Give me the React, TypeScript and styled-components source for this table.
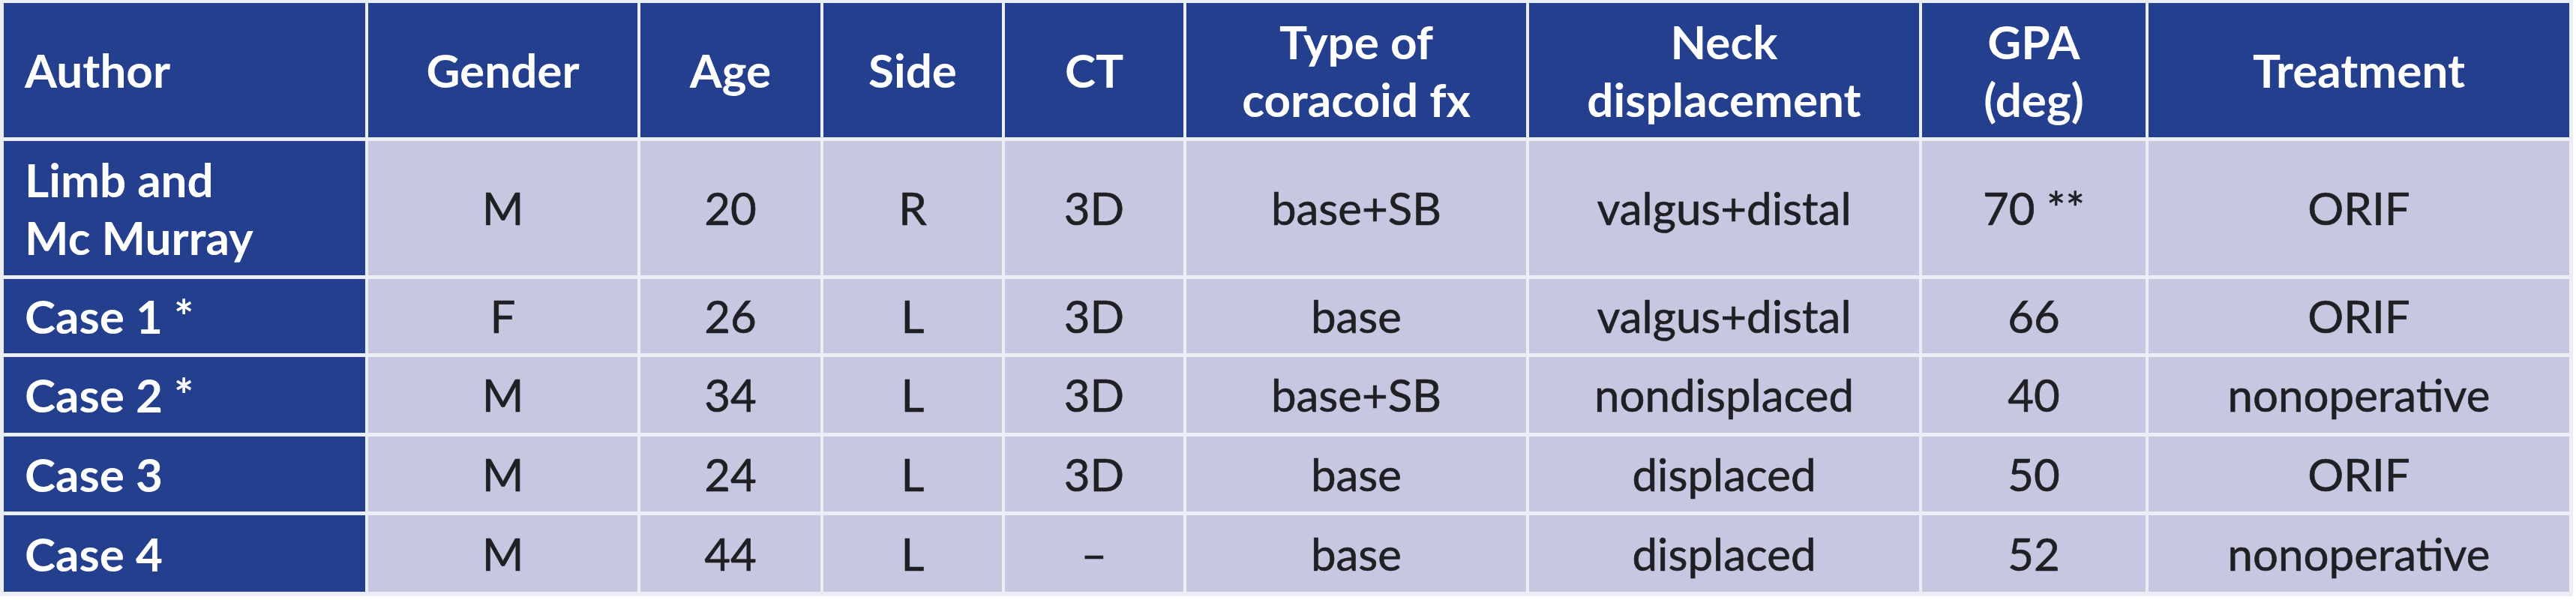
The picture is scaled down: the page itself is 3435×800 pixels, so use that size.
import styled, { createGlobalStyle } from "styled-components";

const GlobalStyle = createGlobalStyle`
  html, body {
    margin: 0;
    padding: 0;
    background: #ffffff;
  }
  body {
    font-family: Lato, "Open Sans", "Liberation Sans", sans-serif;
  }
`;

const columns = [482, 359, 240, 238, 238, 453, 520, 298, 561];

const headers = [
  "Author",
  "Gender",
  "Age",
  "Side",
  "CT",
  "Type of\ncoracoid fx",
  "Neck\ndisplacement",
  "GPA\n(deg)",
  "Treatment",
];

const rows = [
  ["Limb and\nMc Murray", "M", "20", "R", "3D", "base+SB", "valgus+distal", "70 **", "ORIF"],
  ["Case 1 *", "F", "26", "L", "3D", "base", "valgus+distal", "66", "ORIF"],
  ["Case 2 *", "M", "34", "L", "3D", "base+SB", "nondisplaced", "40", "nonoperative"],
  ["Case 3", "M", "24", "L", "3D", "base", "displaced", "50", "ORIF"],
  ["Case 4", "M", "44", "L", "–", "base", "displaced", "52", "nonoperative"],
];

const rowHeights = [179, 179, 99, 101, 100, 102];

const Table = styled.div<{ $cols: number[]; $rows: number[] }>`
  display: grid;
  grid-template-columns: ${(p) => p.$cols.map((c) => `${c}px`).join(" ")};
  grid-template-rows: ${(p) => p.$rows.map((r) => `${r}px`).join(" ")};
  column-gap: 4px;
  row-gap: 5px;
  padding: 4px 5px 6px 5px;
  width: max-content;
  background: #eceef6;
`;

const HeadCell = styled.div<{ $left?: boolean }>`
  display: flex;
  align-items: center;
  justify-content: ${(p) => (p.$left ? "flex-start" : "center")};
  padding: 0 ${(p) => (p.$left ? "28px" : "8px")};
  background: #243f8d;
  color: #ffffff;
  font-weight: 700;
  font-size: 62px;
  line-height: 77px;
  text-align: ${(p) => (p.$left ? "left" : "center")};
  white-space: pre-line;
`;

const Cell = styled.div`
  display: flex;
  align-items: center;
  justify-content: center;
  background: #c6c7e1;
  color: #202024;
  font-weight: 400;
  font-size: 60px;
  line-height: 77px;
  text-align: center;
  white-space: pre-line;
  -webkit-text-stroke: 0.6px #202024;
`;

export default function App() {
  return (
    <>
      <GlobalStyle />
      <Table $cols={columns} $rows={rowHeights}>
        {headers.map((h, i) => (
          <HeadCell key={h} $left={i === 0}>
            {h}
          </HeadCell>
        ))}
        {rows.map((row) =>
          row.map((value, i) =>
            i === 0 ? (
              <HeadCell key={`${row[0]}-${i}`} $left>
                {value}
              </HeadCell>
            ) : (
              <Cell key={`${row[0]}-${i}`}>{value}</Cell>
            )
          )
        )}
      </Table>
    </>
  );
}
